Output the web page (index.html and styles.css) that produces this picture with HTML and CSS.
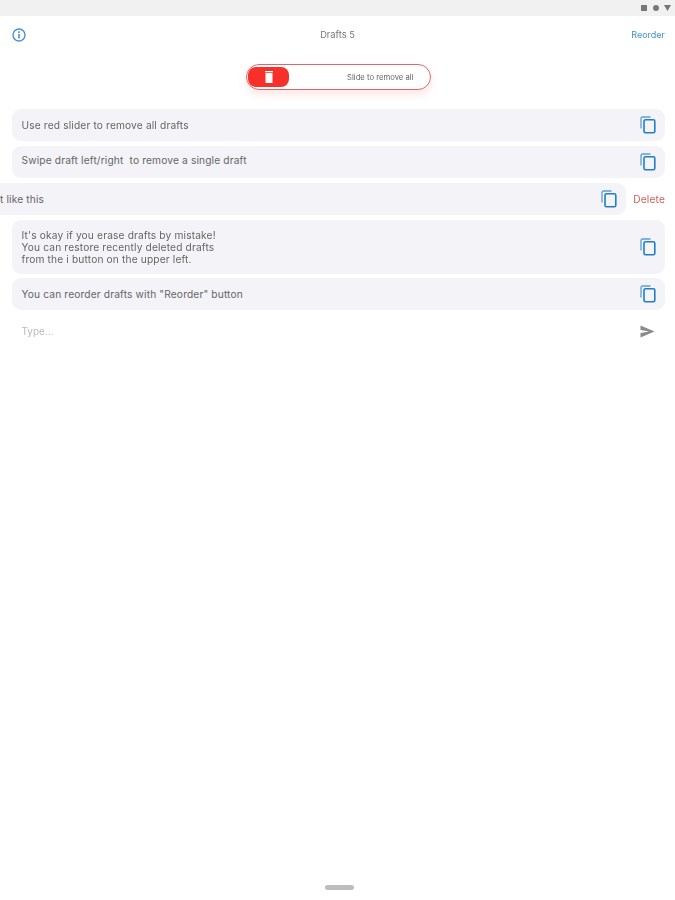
FILE: index.html
```html
<!DOCTYPE html>
<html lang="en">
<head>
<meta charset="utf-8">
<title>Drafts</title>
<link rel="stylesheet" href="styles.css">
</head>
<body>
<div class="page">
  <div class="status">
    <svg class="status-icons" width="30" height="8" viewBox="0 0 30 8"><rect x="0" y="1" width="6" height="6" fill="#777"/><circle cx="15" cy="4" r="3" fill="#777"/><path d="M23 1h7l-3.500 6z" fill="#777"/></svg>
  </div>
  <header class="nav">
    <svg class="info" width="14" height="14" viewBox="0 0 14 14"><circle cx="7" cy="7" r="6" fill="none" stroke="#4a90d6" stroke-width="1.400"/><rect x="6.200" y="6" width="1.600" height="4.500" fill="#4a90d6"/><rect x="6.200" y="3.300" width="1.600" height="1.700" fill="#4a90d6"/></svg>
    <div class="title">Drafts 5</div>
    <div class="reorder">Reorder</div>
  </header>
  <div class="slider-wrap">
    <div class="slider">
      <div class="thumb">
        <svg width="10" height="12" viewBox="0 0 10 12"><path d="M1 0h8v1.200H1zM1.500 2h7V12h-7z" fill="#fff"/></svg>
      </div>
      <div class="slider-label">Slide to remove all</div>
    </div>
  </div>
  <main class="list">
    <div class="row"><div class="card"><span class="text">Use red slider to remove all drafts</span><svg class="copy"><use href="#copy"/></svg></div></div>
    <div class="row"><div class="card"><span class="text raised">Swipe draft left/right&nbsp; to remove a single draft</span><svg class="copy"><use href="#copy"/></svg></div></div>
    <div class="row swiped"><div class="card"><span class="text">t like this</span><svg class="copy"><use href="#copy"/></svg></div><div class="delete">Delete</div></div>
    <div class="row"><div class="card tall"><span class="text">It's okay if you erase drafts by mistake!<br>You can restore recently deleted drafts<br>from the i button on the upper left.</span><svg class="copy"><use href="#copy"/></svg></div></div>
    <div class="row tight"><div class="card"><span class="text">You can reorder drafts with "Reorder" button</span><svg class="copy"><use href="#copy"/></svg></div></div>
    <div class="input">
      <span class="placeholder">Type...</span>
      <svg class="send" width="15" height="13" viewBox="0 0 15 13"><path d="M0.500 0.500L14.500 6.500L0.500 12.500V8L9 6.500L0.500 5z" fill="#8a8a8a"/></svg>
    </div>
  </main>
  <div class="handle"></div>
</div>
<svg width="0" height="0" class="defs"><defs><symbol id="copy" viewBox="0 0 16 18"><path d="M10.500 1H2.500a1.500 1.500 0 0 0-1.500 1.500V12.500" fill="none" stroke="#5a9fd8" stroke-width="1.300"/><rect x="4" y="3.800" width="10.800" height="13" rx="1.500" fill="none" stroke="#1f7fcb" stroke-width="1.600"/></symbol></defs></svg>
</body>
</html>
```
FILE: styles.css
```css
* { box-sizing: border-box; }
html, body { margin: 0; height: 100%; background: #fff; overflow: hidden; }
body { font-family: Inter, "Liberation Sans", sans-serif; color: #555; }
.defs { position: absolute; }
.page { width: 675px; height: 900px; position: relative; overflow: hidden; display: flex; flex-direction: column; filter: blur(.6px); }
.status { height: 16px; background: #f1f1f1; display: flex; justify-content: flex-end; align-items: center; padding-right: 4px; }
.status-icons { display: block; }
.nav { height: 37px; display: flex; align-items: center; justify-content: space-between; padding: 0 10px 0 12px; position: relative; }
.info { display: block; }
.title { position: absolute; left: 0; right: 0; text-align: center; font-size: 9.300px; color: #777; }
.reorder { font-size: 9px; color: #3f93c8; }
.slider-wrap { display: flex; justify-content: center; padding-top: 11px; height: 56px; padding-left: 1px; }
.slider { width: 185px; height: 26px; border: 1.500px solid #d9686a; border-radius: 13px; display: flex; align-items: center; padding-left: 1.500px; box-shadow: 0 4px 8px rgba(255, 90, 90, .16); }
.thumb { width: 41px; height: 20px; background: #f8302a; border-radius: 8px; display: flex; align-items: center; justify-content: center; }
.slider-label { margin-left: 58px; font-size: 7.700px; color: #666; white-space: nowrap; }
.list { display: flex; flex-direction: column; padding: 0 10px 0 11.500px; gap: 5px; }
.row { display: flex; align-items: center; }
.tight { margin-top: -1px; }
.card { flex: 1; min-height: 32px; background: #f3f3f8; border-radius: 9px; display: flex; align-items: center; justify-content: space-between; padding: 0 9px 0 10px; min-width: 0; }
.tall { min-height: 54px; }
.text { font-size: 10.200px; line-height: 12px; color: #666; white-space: nowrap; letter-spacing: .15px; }
.raised { margin-bottom: 5px; }
.copy { width: 16px; height: 18px; display: block; }
.swiped { margin-left: -11.500px; }
.swiped .card { margin-right: 7px; padding-left: 0; border-radius: 0 9px 9px 0; }
.delete { font-size: 10.200px; letter-spacing: .15px; color: #d2605c; flex: none; }
.input { display: flex; align-items: center; justify-content: space-between; height: 32px; padding: 0 10px 0 10px; }
.placeholder { font-size: 10px; color: #bbb; }
.handle { position: absolute; left: 325px; bottom: 10px; width: 29px; height: 5px; background: #bdbdbd; border-radius: 3px; }
```
